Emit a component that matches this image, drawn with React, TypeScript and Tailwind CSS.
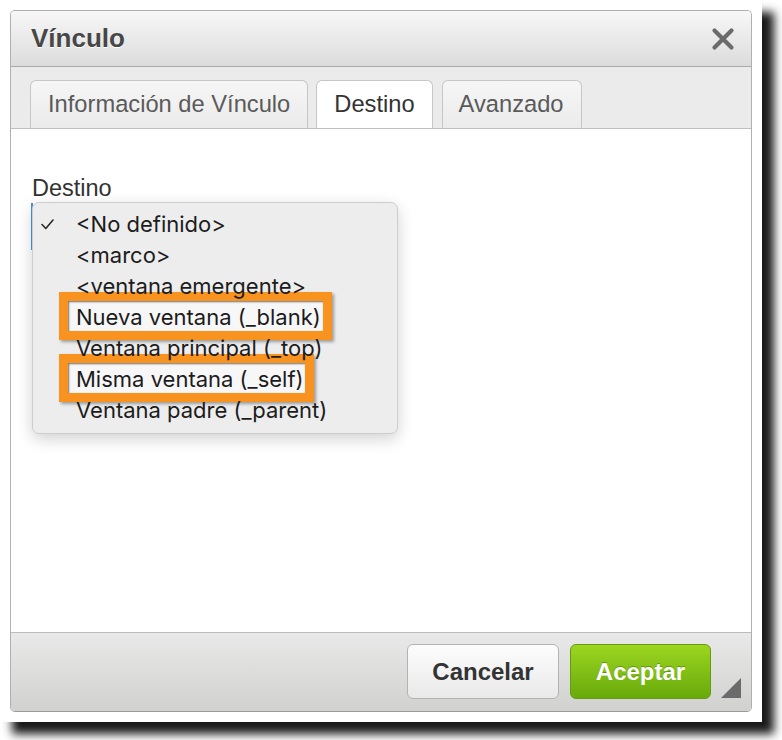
import React from "react";

const items = [
  { label: "<No definido>", checked: true },
  { label: "<marco>" },
  { label: "<ventana emergente>" },
  { label: "Nueva ventana (_blank)", box: 273 },
  { label: "Ventana principal (_top)" },
  { label: "Misma ventana (_self)", box: 255 },
  { label: "Ventana padre (_parent)" },
];

function CloseIcon() {
  return (
    <svg width="24" height="24" viewBox="0 0 24 24">
      <path d="M3.5 3.5 L20.5 20.5 M20.5 3.5 L3.5 20.5" stroke="#6b6b6b" strokeWidth="4.2" strokeLinecap="round" />
    </svg>
  );
}

function Check() {
  return (
    <svg width="13" height="11" viewBox="0 0 13 11">
      <path d="M1 5.5 L4.8 9.5 L12 1" fill="none" stroke="#2a2a2a" strokeWidth="1.6" strokeLinecap="round" strokeLinejoin="round" />
    </svg>
  );
}

export default function App() {
  return (
    <div className="w-[782px] h-[740px] bg-white overflow-hidden">
      <div className="w-[762px] h-[722px] bg-white p-[10px] shadow-[12px_12px_9px_rgba(0,0,0,0.9)] font-['Liberation_Sans',Arial,sans-serif]">
        <div className="w-[742px] h-[702px] flex flex-col border border-[#b0b0b0] border-b-[#9a9a9a] rounded-[5px] overflow-hidden">
          {/* Title bar */}
          <div className="h-[56px] shrink-0 flex items-center justify-between pl-[20px] pr-[16px] bg-gradient-to-b from-[#f7f7f7] to-[#dcdcdc] border-b border-[#a9a9a9]">
            <span className="text-[26px] font-bold text-[#474747] [text-shadow:0_1px_0_#ffffff]">Vínculo</span>
            <CloseIcon />
          </div>
          {/* Tabs */}
          <div className="h-[62px] shrink-0 flex items-end gap-[8px] pl-[19px] bg-[#ebebeb] border-b border-[#c0c0c0]">
            <div className="h-[48px] flex items-center px-[17px] rounded-t-[6px] border border-b-0 border-[#c6c6c6] bg-gradient-to-b from-[#f6f6f6] to-[#ebebeb] text-[23.7px] text-[#5a5a5a]">
              Información de Vínculo
            </div>
            <div className="h-[48px] flex items-center px-[17px] rounded-t-[6px] border border-b-0 border-[#c6c6c6] bg-white text-[23.7px] text-[#333333]">
              Destino
            </div>
            <div className="h-[48px] flex items-center pl-[16px] pr-[17px] ml-[1px] rounded-t-[6px] border border-b-0 border-[#c6c6c6] bg-gradient-to-b from-[#f6f6f6] to-[#ebebeb] text-[23.7px] text-[#5a5a5a]">
              Avanzado
            </div>
          </div>
          {/* Content */}
          <div className="relative flex-1 bg-white pl-[21px] pt-[45px]">
            <div className="text-[23.5px] leading-[28px] text-[#333333]">Destino</div>
            <div className="absolute left-[20px] top-[74px] w-[2px] h-[47px] bg-[#4a90e2]" />
            {/* Native select popup */}
            <div className="absolute left-[21px] top-[73px] w-[366px] h-[232px] rounded-[7px] border border-[#cdcdcd] bg-[#ededed] shadow-[0_5px_16px_rgba(0,0,0,0.18)] pt-[6px] font-['Inter','Liberation_Sans',sans-serif] text-[22px] text-[#1c1c1c]">
              {items.map((it) => (
                <div key={it.label} className="relative h-[31px] flex items-center pl-[43px]">
                  {it.checked && (
                    <span className="absolute left-[8px] top-[10px]">
                      <Check />
                    </span>
                  )}
                  {it.box && (
                    <div
                      className="absolute left-[26px] top-[-10px] h-[48px] z-10 border-[9px] border-[#f7931e] bg-[#f7f7f7] shadow-[inset_1px_1px_2px_rgba(0,0,0,0.55),2px_2px_3px_rgba(0,0,0,0.35)]"
                      style={{ width: it.box }}
                    />
                  )}
                  <span className="relative z-20 whitespace-nowrap">{it.label}</span>
                </div>
              ))}
            </div>
          </div>
          {/* Footer */}
          <div className="h-[79px] shrink-0 flex items-start justify-end pt-[11px] pr-[10px] border-t border-[#bcbcbc] bg-gradient-to-b from-[#e9e9e9] to-[#d1d1cf]">
            <button className="w-[152px] h-[55px] rounded-[6px] border border-[#b3b3b3] bg-gradient-to-b from-[#fdfdfd] to-[#e9e9e9] text-[24px] font-bold text-[#333333]">
              Cancelar
            </button>
            <button className="ml-[11px] w-[141px] h-[55px] rounded-[6px] border border-[#639c0c] bg-gradient-to-b from-[#9cd620] to-[#68aa0b] text-[24px] font-bold text-white [text-shadow:0_-1px_0_rgba(60,100,0,0.5)]">
              Aceptar
            </button>
            <svg className="ml-[10px] mt-[34px]" width="20" height="20" viewBox="0 0 20 20">
              <path d="M20 0 L20 20 L0 20 Z" fill="#6b6b6b" />
            </svg>
          </div>
        </div>
      </div>
    </div>
  );
}
